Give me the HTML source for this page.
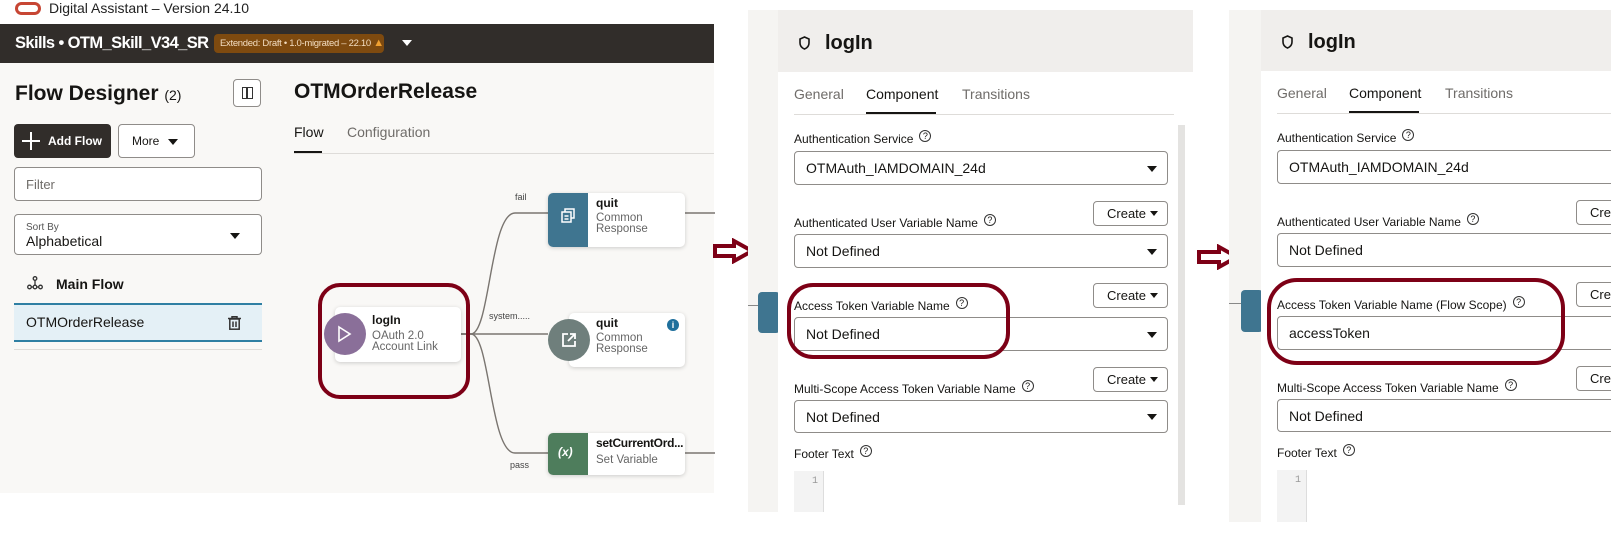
<!DOCTYPE html>
<html><head><meta charset="utf-8">
<style>
*{box-sizing:border-box;margin:0;padding:0}
body{width:1611px;height:560px;background:#fff;font-family:"Liberation Sans",sans-serif;color:#161513;position:relative;overflow:hidden}
.a{position:absolute}
.sel{position:absolute;border:1px solid #8f8c89;border-radius:4px;background:#fff;font-size:14px;padding-left:11px;display:flex;align-items:center}
.car{position:absolute;width:0;height:0;border-left:5px solid transparent;border-right:5px solid transparent;border-top:6px solid #161513}
.lbl{position:absolute;font-size:12px;color:#161513;white-space:nowrap}
.help{display:inline-block;width:12px;height:12px;border:1px solid #333;border-radius:50%;font-size:9px;line-height:10px;text-align:center;margin-left:6px;vertical-align:4px}
.btn{position:absolute;border:1px solid #8f8c89;border-radius:4px;background:#fff;font-size:13px;padding-left:13px;display:flex;align-items:center}
.tab{position:absolute;font-size:14px;color:#6f6c69}
.card{position:absolute;background:#fff;border-radius:5px;box-shadow:0 1px 4px rgba(0,0,0,.18)}
.nt{position:absolute;font-size:11.5px;color:#666;line-height:12px}
</style></head><body>

<!-- Left app -->
<div class="a" style="left:15px;top:2px;width:26px;height:13px;border:3px solid #c74634;border-radius:7px"></div>
<div class="a" style="left:49px;top:0;font-size:14px;line-height:16px;color:#222">Digital Assistant – Version 24.10</div>
<div class="a" style="left:0;top:24px;width:714px;height:39px;background:#312d2a"></div>
<div class="a" style="left:15px;top:34px;font-size:16.5px;font-weight:bold;color:#fff;letter-spacing:-0.6px;white-space:nowrap">Skills • OTM_Skill_V34_SR</div>
<div class="a" style="left:214px;top:34px;width:170px;height:19px;background:#7e4a0f;border-radius:4px;color:#f2dcc0;font-size:9.5px;line-height:19px;padding-left:6px;white-space:nowrap;letter-spacing:-0.3px">Extended: Draft • 1.0-migrated – 22.10 <span style="color:#f0a030;font-size:11px">▲</span></div>
<div class="car" style="left:402px;top:40px;border-top-color:#fff"></div>
<div class="a" style="left:0;top:63px;width:714px;height:430px;background:#f9f8f6"></div>

<div class="a" style="left:15px;top:82px;font-size:21px;font-weight:bold">Flow Designer <span style="font-size:14px;font-weight:normal">(2)</span></div>
<div class="a" style="left:233px;top:79px;width:28px;height:28px;border:1px solid #8f8c89;border-radius:4px;background:#fff"><div class="a" style="left:8px;top:7px;width:11px;height:12px;border:1.5px solid #333"></div><div class="a" style="left:12px;top:7px;width:1.5px;height:12px;background:#333"></div></div>
<div class="a" style="left:294px;top:80px;font-size:21px;font-weight:bold">OTMOrderRelease</div>
<div class="a" style="left:294px;top:124px;font-size:14px;color:#161513">Flow</div>
<div class="a" style="left:347px;top:124px;font-size:14px;color:#6f6c69">Configuration</div>
<div class="a" style="left:294px;top:151px;width:28px;height:2px;background:#161513"></div>
<div class="a" style="left:294px;top:153px;width:420px;height:1px;background:#dedcd9"></div>

<div class="a" style="left:14px;top:124px;width:97px;height:34px;background:#312d2a;border-radius:4px;color:#fff;font-size:12px;font-weight:bold;line-height:34px;padding-left:34px">Add Flow</div>
<div class="a" style="left:22px;top:132px;width:18px;height:18px"><div class="a" style="left:8px;top:0;width:2px;height:18px;background:#fff"></div><div class="a" style="left:0;top:8px;width:18px;height:2px;background:#fff"></div></div>
<div class="btn" style="left:118px;top:124px;width:77px;height:34px;font-size:12px;">More</div>
<div class="car" style="left:168px;top:139px"></div>
<div class="sel" style="left:14px;top:167px;width:248px;height:34px;color:#6f6c69;font-size:13px">Filter</div>
<div class="sel" style="left:14px;top:214px;width:248px;height:41px;display:block;padding-top:7px"><div style="font-size:10px;color:#555">Sort By</div><div style="font-size:14px">Alphabetical</div></div>
<div class="car" style="left:230px;top:233px"></div>

<svg class="a" style="left:27px;top:276px" width="16" height="14" viewBox="0 0 16 14" fill="none" stroke="#333" stroke-width="1.3"><circle cx="8" cy="2.5" r="1.8"/><line x1="8" y1="4" x2="8" y2="9"/><circle cx="2.5" cy="11" r="1.8"/><circle cx="8" cy="11" r="1.8"/><circle cx="13.5" cy="11" r="1.8"/><line x1="4" y1="11" x2="6" y2="11"/><line x1="10" y1="11" x2="12" y2="11"/></svg>
<div class="a" style="left:56px;top:276px;font-size:14px;font-weight:bold">Main Flow</div>
<div class="a" style="left:14px;top:303px;width:248px;height:39px;background:#e4f0f6;border-top:2px solid #2f7fa3;border-bottom:2px solid #2f7fa3"></div>
<div class="a" style="left:26px;top:314px;font-size:14px">OTMOrderRelease</div>
<svg class="a" style="left:228px;top:316px" width="13" height="14" viewBox="0 0 13 14" fill="none" stroke="#333" stroke-width="1.5"><line x1="0" y1="2.5" x2="13" y2="2.5"/><path d="M4 2.5V0.8h5v1.7"/><rect x="1.8" y="3" width="9.4" height="10.2"/><line x1="5" y1="5.5" x2="5" y2="11"/><line x1="8" y1="5.5" x2="8" y2="11"/></svg>
<div class="a" style="left:14px;top:349px;width:248px;height:1px;background:#dedcd9"></div>

<!-- canvas -->
<svg class="a" style="left:455px;top:190px" width="260" height="290" fill="none" stroke="#7a7570" stroke-width="1.4">
<path d="M6 144 H16 C35 144 35 23 60 23 H93"/>
<path d="M6 144 H93"/>
<path d="M6 144 H16 C35 144 35 263 60 263 H93"/>
<path d="M230 23 H260"/><path d="M230 263 H260"/>
</svg>
<div class="nt" style="left:515px;top:191px;font-size:9px;color:#444">fail</div>
<div class="nt" style="left:489px;top:310px;font-size:9px;color:#444">system.....</div>
<div class="nt" style="left:510px;top:459px;font-size:9px;color:#444">pass</div>

<div class="a" style="left:318px;top:283px;width:152px;height:116px;border:4px solid #7d0016;border-radius:22px"></div>
<div class="card" style="left:335px;top:307px;width:126px;height:55px"></div>
<div class="a" style="left:324px;top:313px;width:42px;height:42px;border-radius:50%;background:#8a6f99"></div>
<svg class="a" style="left:337px;top:325px" width="16" height="18"><path d="M2 2 L13 9 L2 16Z" fill="none" stroke="#fff" stroke-width="1.6"/></svg>
<div class="a" style="left:372px;top:313px;font-size:12px;font-weight:bold">logIn</div>
<div class="nt" style="left:372px;top:330px">OAuth 2.0</div>
<div class="nt" style="left:372px;top:341px">Account Link</div>

<div class="card" style="left:548px;top:193px;width:137px;height:54px;overflow:hidden"><div class="a" style="left:0;top:0;width:40px;height:54px;background:#3f7590"></div></div>
<svg class="a" style="left:561px;top:208px" width="14" height="15" fill="none" stroke="#fff" stroke-width="1.5"><rect x="4" y="1" width="9" height="9"/><rect x="1" y="4" width="9" height="10" fill="#3f7590"/><line x1="3.5" y1="8" x2="7.5" y2="8"/><line x1="3.5" y1="11" x2="7.5" y2="11"/></svg>
<div class="a" style="left:596px;top:196px;font-size:12px;font-weight:bold">quit</div>
<div class="nt" style="left:596px;top:212px">Common</div>
<div class="nt" style="left:596px;top:223px">Response</div>

<div class="card" style="left:569px;top:313px;width:116px;height:54px"></div>
<div class="a" style="left:548px;top:319px;width:42px;height:42px;border-radius:50%;background:#6f7f7c"></div>
<svg class="a" style="left:561px;top:332px" width="16" height="16" fill="none" stroke="#fff" stroke-width="1.8"><path d="M7 2H2V14H14V9"/><path d="M9 2H14V7M14 2L7 9"/></svg>
<div class="a" style="left:596px;top:316px;font-size:12px;font-weight:bold">quit</div>
<div class="nt" style="left:596px;top:332px">Common</div>
<div class="nt" style="left:596px;top:343px">Response</div>
<div class="a" style="left:667px;top:319px;width:12px;height:12px;border-radius:50%;background:#1e6f9c;color:#fff;font-size:9px;font-weight:bold;text-align:center;line-height:12px">i</div>

<div class="card" style="left:548px;top:433px;width:137px;height:42px;overflow:hidden"><div class="a" style="left:0;top:0;width:40px;height:42px;background:#4e7d5c"></div></div>
<div class="a" style="left:558px;top:445px;color:#fff;font-size:12px;font-weight:bold;font-style:italic">(x)</div>
<div class="a" style="left:596px;top:436px;font-size:12px;font-weight:bold;letter-spacing:-0.3px">setCurrentOrd...</div>
<div class="nt" style="left:596px;top:454px">Set Variable</div>

<!-- arrows -->
<svg class="a" style="left:712px;top:238px" width="44" height="26"><path d="M3 8 H22 V3 L40 13 L22 23 V18 H3Z" fill="#fff" stroke="#7d0016" stroke-width="4" stroke-linejoin="miter"/></svg>
<svg class="a" style="left:1196px;top:244px" width="46" height="26"><path d="M3 8 H23 V3 L41 13 L23 23 V18 H3Z" fill="#fff" stroke="#7d0016" stroke-width="4"/></svg>

<!-- Panel 2 -->
<div class="a" style="left:748px;top:10px;width:30px;height:502px;background:#f5f4f2"></div>
<div class="a" style="left:748px;top:305px;width:12px;height:1px;background:#888"></div>
<div class="a" style="left:758px;top:292px;width:22px;height:41px;background:#3f7590;border-radius:4px"></div>
<div class="a" style="left:778px;top:10px;width:415px;height:62px;background:#f0eeec"></div>
<div class="a" style="left:778px;top:72px;width:415px;height:440px;background:#fff"></div>
<div class="a" style="left:1178px;top:125px;width:7px;height:380px;background:#e4e3e1"></div>

<!-- Panel 3 -->
<div class="a" style="left:1229px;top:10px;width:32px;height:512px;background:#f5f4f2"></div>
<div class="a" style="left:1229px;top:303px;width:14px;height:1px;background:#888"></div>
<div class="a" style="left:1241px;top:290px;width:22px;height:42px;background:#3f7590;border-radius:4px"></div>
<div class="a" style="left:1261px;top:10px;width:350px;height:61px;background:#f0eeec"></div>
<div class="a" style="left:1261px;top:71px;width:350px;height:451px;background:#fff"></div>

<!-- panel 2 content -->
<svg class="a" style="left:799px;top:36px" width="11" height="14" fill="none" stroke="#161513" stroke-width="1.6"><path d="M5.5 1 L10 3 V7 C10 10 8 12 5.5 13 C3 12 1 10 1 7 V3Z"/></svg>
<div class="a" style="left:825px;top:32px;font-size:20px;font-weight:bold">logIn</div>
<div class="tab" style="left:794px;top:86px">General</div>
<div class="tab" style="left:866px;top:86px;color:#161513">Component</div>
<div class="tab" style="left:962px;top:86px">Transitions</div>
<div class="a" style="left:866px;top:112px;width:70px;height:2px;background:#161513"></div>
<div class="a" style="left:794px;top:114px;width:380px;height:1px;background:#dedcd9"></div>

<div class="lbl" style="left:794px;top:130px">Authentication Service<span class="help">?</span></div>
<div class="sel" style="left:794px;top:151px;width:374px;height:34px">OTMAuth_IAMDOMAIN_24d</div><div class="car" style="left:1147px;top:166px"></div>
<div class="btn" style="left:1093px;top:201px;width:75px;height:25px">Create</div><div class="car" style="left:1150px;top:211px;border-width:5px 4px 0"></div>
<div class="lbl" style="left:794px;top:214px">Authenticated User Variable Name<span class="help">?</span></div>
<div class="sel" style="left:794px;top:234px;width:374px;height:34px">Not Defined</div><div class="car" style="left:1147px;top:249px"></div>
<div class="btn" style="left:1093px;top:283px;width:75px;height:25px">Create</div><div class="car" style="left:1150px;top:293px;border-width:5px 4px 0"></div>
<div class="lbl" style="left:794px;top:297px">Access Token Variable Name<span class="help">?</span></div>
<div class="sel" style="left:794px;top:317px;width:374px;height:34px">Not Defined</div><div class="car" style="left:1147px;top:332px"></div>
<div class="a" style="left:787px;top:283px;width:223px;height:76px;border:4px solid #7d0016;border-radius:26px"></div>
<div class="btn" style="left:1093px;top:367px;width:75px;height:25px">Create</div><div class="car" style="left:1150px;top:377px;border-width:5px 4px 0"></div>
<div class="lbl" style="left:794px;top:380px">Multi-Scope Access Token Variable Name<span class="help">?</span></div>
<div class="sel" style="left:794px;top:400px;width:374px;height:33px">Not Defined</div><div class="car" style="left:1147px;top:414px"></div>
<div class="lbl" style="left:794px;top:445px">Footer Text<span class="help">?</span></div>
<div class="a" style="left:794px;top:471px;width:30px;height:41px;background:#f3f3f3;border-right:1px solid #ddd;font-size:10px;color:#999;text-align:right;padding:5px 5px 0 0;font-family:'Liberation Mono',monospace">1</div>

<!-- panel 3 content -->
<svg class="a" style="left:1282px;top:35px" width="11" height="14" fill="none" stroke="#161513" stroke-width="1.6"><path d="M5.5 1 L10 3 V7 C10 10 8 12 5.5 13 C3 12 1 10 1 7 V3Z"/></svg>
<div class="a" style="left:1308px;top:31px;font-size:20px;font-weight:bold">logIn</div>
<div class="tab" style="left:1277px;top:85px">General</div>
<div class="tab" style="left:1349px;top:85px;color:#161513">Component</div>
<div class="tab" style="left:1445px;top:85px">Transitions</div>
<div class="a" style="left:1349px;top:111px;width:70px;height:2px;background:#161513"></div>
<div class="a" style="left:1277px;top:113px;width:334px;height:1px;background:#dedcd9"></div>

<div class="lbl" style="left:1277px;top:129px">Authentication Service<span class="help">?</span></div>
<div class="sel" style="left:1277px;top:150px;width:360px;height:34px">OTMAuth_IAMDOMAIN_24d</div>
<div class="btn" style="left:1576px;top:200px;width:60px;height:25px">Create</div>
<div class="lbl" style="left:1277px;top:213px">Authenticated User Variable Name<span class="help">?</span></div>
<div class="sel" style="left:1277px;top:233px;width:360px;height:34px">Not Defined</div>
<div class="btn" style="left:1576px;top:282px;width:60px;height:25px">Create</div>
<div class="lbl" style="left:1277px;top:296px">Access Token Variable Name (Flow Scope)<span class="help">?</span></div>
<div class="sel" style="left:1277px;top:316px;width:360px;height:34px">accessToken</div>
<div class="a" style="left:1267px;top:278px;width:298px;height:87px;border:4px solid #7d0016;border-radius:30px"></div>
<div class="btn" style="left:1576px;top:366px;width:60px;height:25px">Create</div>
<div class="lbl" style="left:1277px;top:379px">Multi-Scope Access Token Variable Name<span class="help">?</span></div>
<div class="sel" style="left:1277px;top:399px;width:360px;height:33px">Not Defined</div>
<div class="lbl" style="left:1277px;top:444px">Footer Text<span class="help">?</span></div>
<div class="a" style="left:1277px;top:470px;width:30px;height:52px;background:#f3f3f3;border-right:1px solid #ddd;font-size:10px;color:#999;text-align:right;padding:5px 5px 0 0;font-family:'Liberation Mono',monospace">1</div>
</body></html>
